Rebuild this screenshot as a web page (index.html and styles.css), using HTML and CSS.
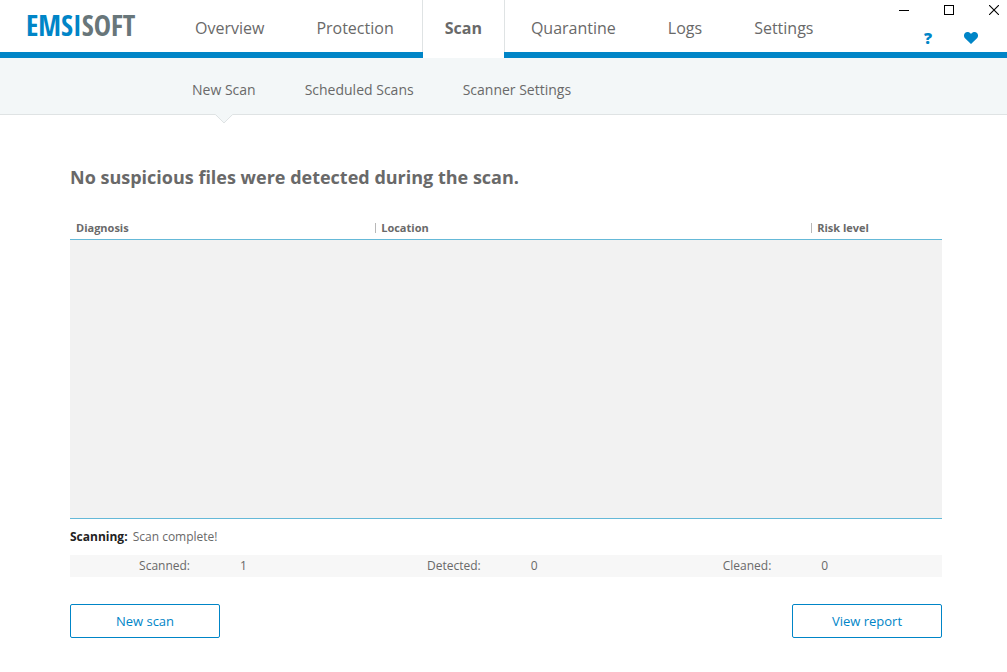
FILE: index.html
```html
<!DOCTYPE html>
<html lang="en">
<head>
<meta charset="utf-8">
<meta name="viewport" content="width=device-width, initial-scale=1">
<title>Emsisoft - Scan</title>
<link rel="stylesheet" href="styles.css">
</head>
<body>
<header class="header">
  <div class="logo"><span class="logo-first">EMSI</span>SOFT</div>
  <nav class="tabs" aria-label="Main">
    <a class="tab" href="#overview">Overview</a>
    <a class="tab" href="#protection">Protection</a>
    <a class="tab tab-active" href="#scan" aria-current="page">Scan</a>
    <a class="tab" href="#quarantine">Quarantine</a>
    <a class="tab" href="#logs">Logs</a>
    <a class="tab" href="#settings">Settings</a>
  </nav>
  <div class="controls">
    <div class="window-buttons">
      <button class="icon-button" type="button" aria-label="Minimize"><svg width="10" height="10" viewBox="0 0 10 10" shape-rendering="crispEdges"><path d="M0 5h10v1H0z"/></svg></button>
      <button class="icon-button" type="button" aria-label="Maximize"><svg width="10" height="10" viewBox="0 0 10 10" shape-rendering="crispEdges"><path d="M.5.5h9v9h-9z" fill="none" stroke="#000"/></svg></button>
      <button class="icon-button" type="button" aria-label="Close"><svg width="10" height="10" viewBox="0 0 10 10"><path d="M0 0l10 10M10 0L0 10" fill="none" stroke="#000" stroke-width="1.1"/></svg></button>
    </div>
    <div class="help-buttons">
      <button class="icon-button help" type="button" aria-label="Help">?</button>
      <button class="icon-button" type="button" aria-label="Recommend"><svg width="14" height="12" viewBox="0 0 14 12"><path d="M7 12L1 6.300C-.4 4.800-.3 2.300 1 1 2.500-.4 5.300-.3 7 2 8.700-.3 11.500-.4 13 1c1.300 1.300 1.400 3.800 0 5.300z" fill="#0085c7"/></svg></button>
    </div>
  </div>
</header>
<nav class="subnav" aria-label="Scan">
  <a class="subtab subtab-active" href="#new" aria-current="page">New Scan<svg class="pointer" width="18" height="10" viewBox="0 0 18 10"><path d="M0 0h18v1L9 9 0 1z" fill="#f3f7f8"/><path d="M0 .5h.5L9 9 17.500.5h.5" fill="none" stroke="#dfe3e4"/></svg></a>
  <a class="subtab" href="#scheduled">Scheduled Scans</a>
  <a class="subtab" href="#scanner">Scanner Settings</a>
</nav>
<main class="content">
  <h1 class="title">No suspicious files were detected during the scan.</h1>
  <table class="results">
    <colgroup><col class="col-diagnosis"><col class="col-location"><col class="col-risk"></colgroup>
    <thead>
      <tr><th scope="col">Diagnosis</th><th scope="col"><span class="divided">Location</span></th><th scope="col"><span class="divided">Risk level</span></th></tr>
    </thead>
    <tbody><tr><td class="empty" colspan="3"></td></tr></tbody>
  </table>
  <p class="status"><strong class="status-label">Scanning:</strong> Scan complete!</p>
  <dl class="counts">
    <div class="count"><dt class="count-name">Scanned:</dt><dd class="count-value">1</dd></div>
    <div class="count"><dt class="count-name">Detected:</dt><dd class="count-value">0</dd></div>
    <div class="count"><dt class="count-name">Cleaned:</dt><dd class="count-value">0</dd></div>
  </dl>
  <div class="actions">
    <button class="button" type="button">New scan</button>
    <button class="button" type="button">View report</button>
  </div>
</main>
</body>
</html>
```
FILE: styles.css
```css
* {
  box-sizing: border-box;
}

body {
  margin: 0;
  min-height: 100vh;
  display: flex;
  flex-direction: column;
  background: #fff;
  color: #696969;
  font: 12px/16px "Open Sans", "Noto Sans", sans-serif;
}

a {
  color: inherit;
  text-decoration: none;
}

button {
  font: inherit;
  cursor: pointer;
}

.header {
  display: flex;
  border-bottom: 6px solid #0085c7;
}

.logo {
  width: 169px;
  padding: 8px 0 0 26px;
  color: #68767a;
  font: 700 29px/34px "Open Sans Condensed", "Roboto Condensed", "Liberation Sans Narrow", sans-serif;
}

.logo-first {
  color: #0085c7;
}

.tabs {
  display: flex;
  font-size: 16px;
  line-height: 24px;
}

.tab {
  height: 52px;
  padding: 16px 26px 0;
}

.tab-active {
  position: relative;
  margin-left: 2px;
  padding: 16px 22px 0;
  border: solid #dfe3e4;
  border-width: 0 1px;
  font-weight: 700;
}

.tab-active::after {
  content: "";
  position: absolute;
  inset: 100% 0 auto;
  height: 6px;
  background: #fff;
}

.controls {
  margin-left: auto;
  padding: 5px 8px 0 0;
}

.window-buttons,
.help-buttons {
  display: flex;
  justify-content: flex-end;
}

.window-buttons {
  gap: 35px;
}

.help-buttons {
  gap: 32px;
  padding: 17px 21px 0 0;
}

.icon-button {
  display: flex;
  align-items: center;
  padding: 0;
  border: 0;
  background: none;
}

.help {
  color: #0085c7;
  font-size: 16px;
  font-weight: 800;
  line-height: 12px;
}

.subnav {
  display: flex;
  gap: 49px;
  padding-left: 192px;
  border-bottom: 1px solid #dfe3e4;
  background: #f3f7f8;
  font-size: 14px;
  line-height: 20px;
}

.subtab {
  position: relative;
  padding: 22px 0 14px;
}

.pointer {
  position: absolute;
  top: 100%;
  left: 50%;
  margin-left: -9px;
}

.content {
  flex: 1;
  display: flex;
  flex-direction: column;
  padding: 50px 65px 34px 70px;
}

.title {
  margin: 0 0 26px;
  font-size: 18px;
  line-height: 24px;
}

.results {
  flex: 1;
  width: 100%;
  border-collapse: collapse;
  table-layout: fixed;
  font-size: 11px;
}

.col-diagnosis {
  width: 35%;
}

.col-location {
  width: 50%;
}

.results th {
  height: 24px;
  padding: 2px 0 0 6px;
  border-bottom: 1px solid #65b9d8;
  text-align: left;
}

.results th + th {
  padding-left: 0;
}

.divided {
  display: block;
  padding-left: 5px;
  line-height: 10px;
  border-left: 1px solid #b8b8b8;
}

.empty {
  height: 279px;
  border-bottom: 1px solid #65b9d8;
  background: #f2f2f2;
}

.status {
  margin: 10px 0;
}

.status-label {
  margin-right: 2px;
  color: #222;
}

.counts {
  display: grid;
  grid-template-columns: repeat(3, 1fr);
  margin: 0 0 27px;
  background: #f7f7f7;
  line-height: 22px;
}

.count {
  display: flex;
}

.count-name {
  width: 120px;
  text-align: right;
}

.count-value {
  margin: 0 0 0 50px;
}

.actions {
  display: flex;
  justify-content: space-between;
}

.button {
  width: 150px;
  height: 34px;
  padding: 0;
  border: 1px solid #0085c7;
  border-radius: 2px;
  background: #fff;
  color: #0085c7;
  font-size: 13px;
}
```
